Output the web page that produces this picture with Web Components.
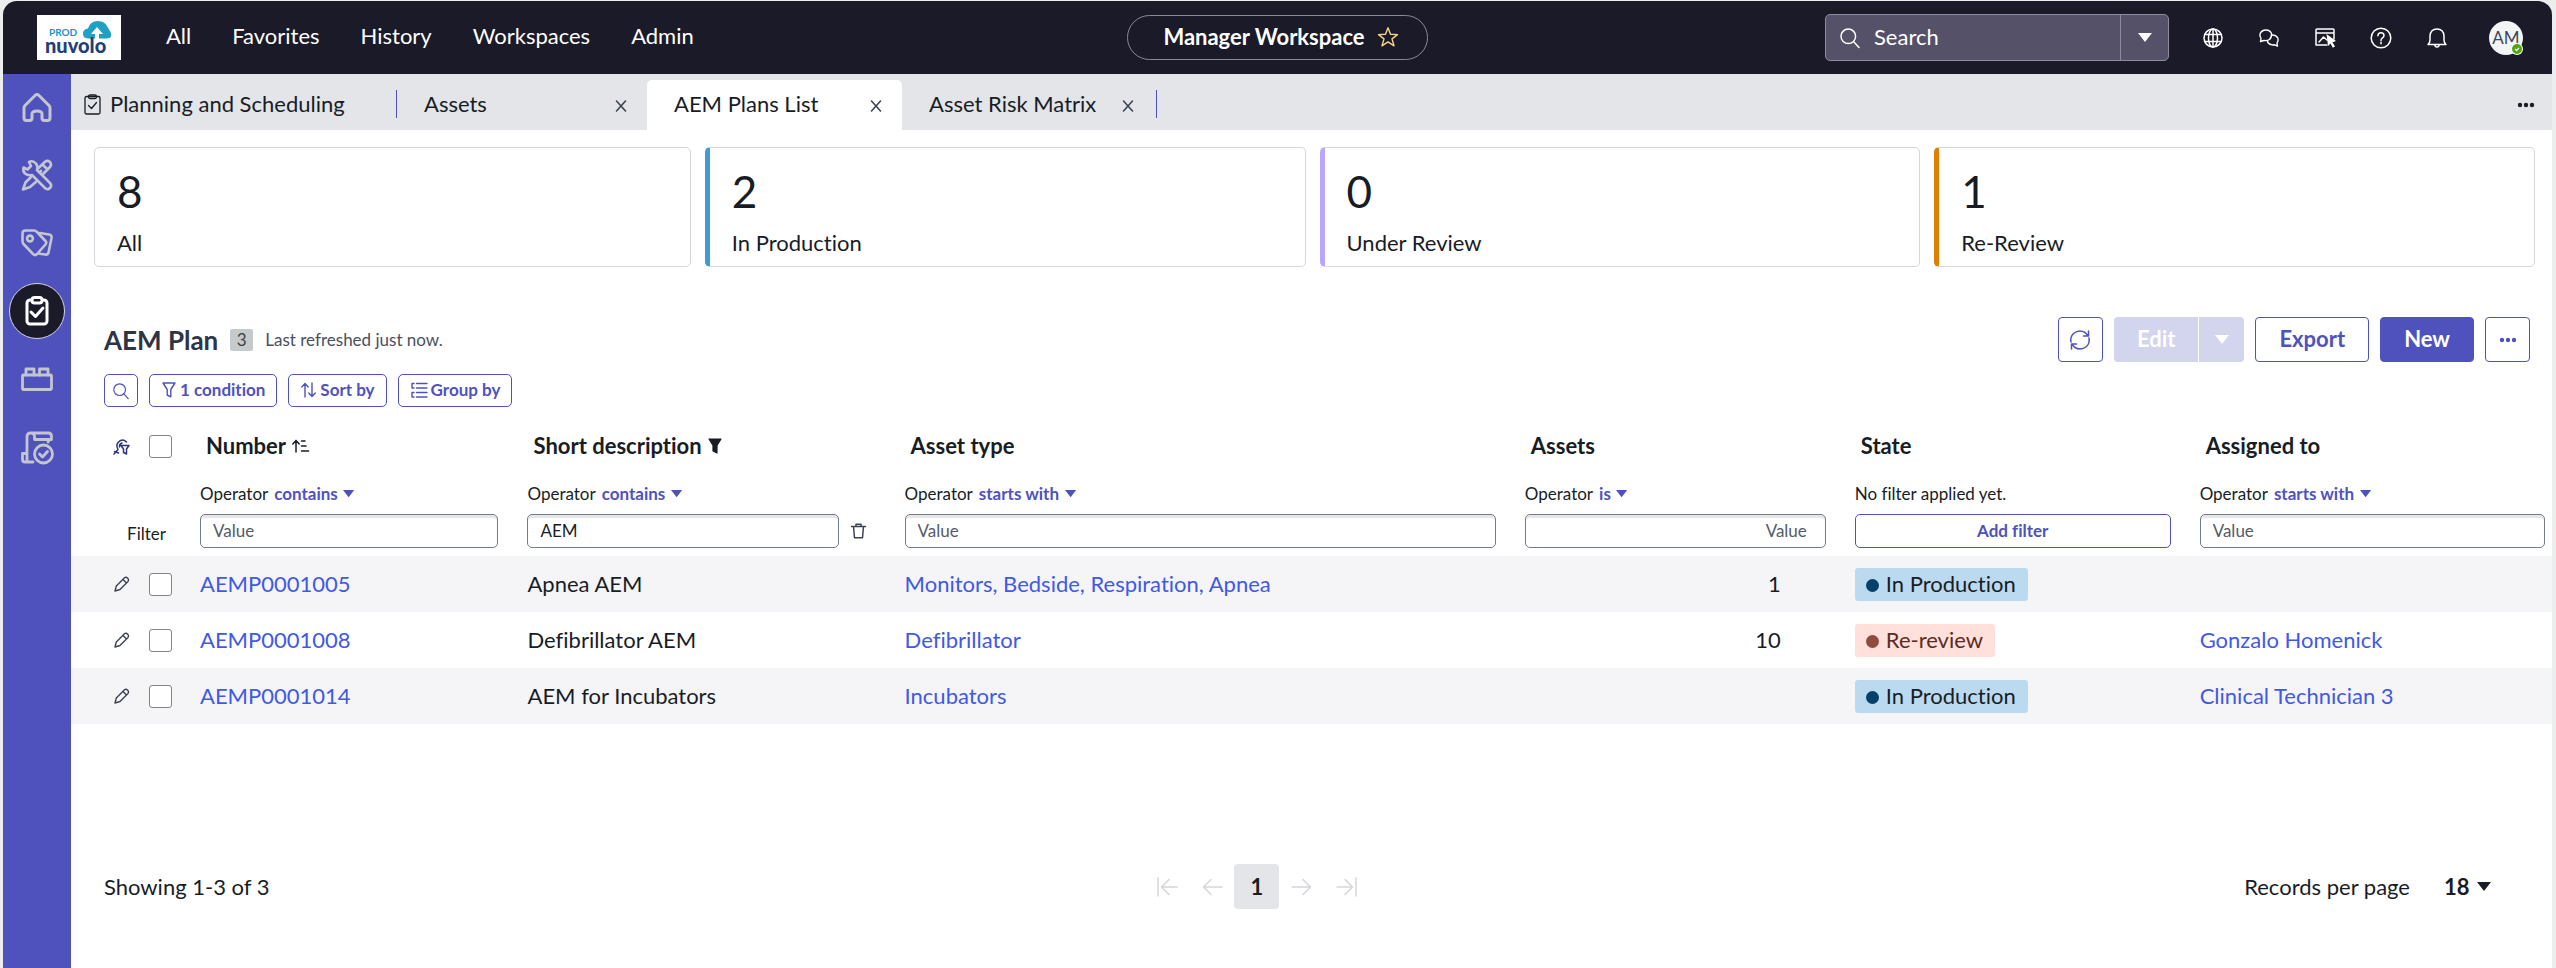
<!DOCTYPE html>
<html lang="en">
<head>
<meta charset="utf-8">
<title>AEM Plans List | Manager Workspace</title>
<style>
    html, body{
        margin: 0;
        height: 100%;
    }
    body{
        box-sizing: border-box;
        min-height: 100vh;
        padding: 1px 4px 0 3px;
        background: #eceeee;
        color: #181d25;
        font-family: Lato, "Open Sans", sans-serif;
        font-size: 22px;
        font-variant-ligatures: none;
        line-height: 28px;
    }
</style>
</head>
<body>
<app-shell>
    <app-header slot="header"></app-header>
    <app-sidebar slot="sidebar"></app-sidebar>
    <tab-bar slot="tabs">
        <tab-item icon="clipboard" divider style="width: 326px">Planning and Scheduling</tab-item>
        <tab-item closable style="width: 250px">Assets</tab-item>
        <tab-item closable active style="width: 255px">AEM Plans List</tab-item>
        <tab-item closable divider style="width: 255px">Asset Risk Matrix</tab-item>
    </tab-bar>
    <score-cards slot="cards">
        <score-card value="8">All</score-card>
        <score-card value="2" style="--accent: #449bd3" accent>In Production</score-card>
        <score-card value="0" style="--accent: #baa6ff" accent>Under Review</score-card>
        <score-card value="1" style="--accent: #df7e00" accent>Re-Review</score-card>
    </score-cards>
    <plan-list slot="list"></plan-list>
    <list-pager slot="pager"></list-pager>
</app-shell>

<script>
const ICONS = {
    home: ['0 0 30 30', 3, '<path d="M3 13.500L13 3.500Q15 1.500 17 3.500L27 13.500Q28 14.500 28 16V26Q28 28.500 25.500 28.500H22.500Q20 28.500 20 26V22Q20 19 15 19Q10 19 10 22V26Q10 28.500 7.500 28.500H4.500Q2 28.500 2 26V16Q2 14.500 3 13.500Z"/>'],
    tools: ['0 0 32 32', 2.6, '<path d="M2.500 8.500L6.500 10.500L10 7L8 3Q12 1 15 4.500Q17 7 16 11L29.500 24.500Q31 27 29 29Q27 31 24.500 29.500L11 16Q7 17 4 14.500Q1.500 12 2.500 8.500Z"/><path d="M17.500 9L24 2.800Q26.500 1 29 3Q31 5.500 29 8L22.500 14.500M22 6L26.500 10.500M10 18L4.500 23.500L2 30.500L9 28L16 22M20 12L18.500 13.500"/>'],
    tags: ['0 0 32 28', 2.6, '<path d="M1.500 4.500Q1.500 1.500 4.500 1.500H13Q14.500 1.500 16 3L24.500 12Q26 13.500 24.500 15.500L16 25Q14 27 12 25L2.500 15Q1.500 14 1.500 12Z"/><circle cx="9" cy="9.500" r="2.900"/><path d="M19 4L28 5.500Q31 6 30.500 9L27.500 23.500Q27 26 24 25.500L17 24.500"/>'],
    board: ['0 0 24 30', 3, '<rect x="2" y="4" width="20" height="24" rx="3"/><rect x="7" y="1.500" width="10" height="5.500" rx="2.500" fill="#1b1a28"/><path d="M6 16L10.500 20.500L18 12"/>'],
    clipboard: ['0 0 17 21', 1.3, '<rect x="1" y="2.500" width="15" height="17.500" rx="1.500"/><rect x="4.500" y="1" width="8" height="3.500" rx="1.500"/><path d="M4.500 11.500L7.500 14.500L12.500 8.500"/>'],
    brick: ['0 0 32 24', 2.8, '<rect x="1.500" y="8" width="29" height="14.500" rx="1"/><path d="M5 8V2H13V8M18.500 8V2H27V8"/>'],
    report: ['0 0 34 33', 2.8, '<path d="M7 22.500V5.500Q7 2 10.500 2H28.500Q31 2 31.500 5V8.500H14.500V5.500Q14.500 2 11 2M31.500 8.500Q29 8 28 11M7 22.500H2.500V28.500Q2.500 31 5 31H13M7 22.500V31"/><circle cx="23.500" cy="23" r="9"/><path d="M19.500 23L22.500 26L27.500 20.500"/>'],
    search: ['0 0 20 20', 1.5, '<circle cx="8.300" cy="8.300" r="7.300"/><path d="M13.700 13.700L19 19.500"/>'],
    star: ['0 0 22 22', 1.4, '<path d="M11 1.800L13.500 8.300L20.500 8.600L15 12.900L17 19.800L11 15.900L5 19.800L7 12.900L1.500 8.600L8.500 8.300Z"/>'],
    globe: ['0 0 20 20', 1.5, '<circle cx="10" cy="10" r="9"/><ellipse cx="10" cy="10" rx="4.500" ry="9"/><path d="M10 1V19M1.800 6.500H18.200M1.800 13.500H18.200"/>'],
    chat: ['0 0 20 18', 1.4, '<path d="M1.500 12.500L2 9.500Q.5 7 1 5Q2.500 1 7 1Q11 1 12.500 4.500Q13 8 10.500 10.500Q8 12 5 11.500Z"/><path d="M13 6Q17.500 6 19 9.500Q19.500 12 18 14L18.500 17L15.500 15.800Q11 16.500 8.800 13.500L8.500 12"/>'],
    pointer: ['0 0 21 20', 1.5, '<path d="M19 11V2Q19 1 18 1H2Q1 1 1 2V17H12M1 5H19M4 14L8.500 9L12 12"/><path fill="currentColor" stroke="none" d="M11.500 6L21 13L17.500 14.200L20 18.500L17.800 19.800L15.500 15.500L13 18Z"/>'],
    help: ['0 0 22 22', 1.5, '<circle cx="11" cy="11" r="9.800"/><path d="M7.900 8.800Q8 5.700 11 5.700Q14 5.700 14 8.500Q14 10 12.300 11Q11 11.900 11 13.500M11 15.200V16.700"/>'],
    bell: ['0 0 20 20', 1.5, '<path d="M1 16.500Q3 15 3 12V8Q3.500 1 10 1Q16.500 1 17 8V12Q17 15 19 16.500ZM7.800 16.800Q8 19 10 19Q12 19 12.200 16.800"/>'],
    close: ['0 0 12 12', 1.6, '<path d="M1.500 1L10.500 11M10.500 1L1.500 11"/>'],
    dots: ['0 0 18 6', 0, '<g fill="currentColor"><circle cx="3" cy="3" r="2.200"/><circle cx="9" cy="3" r="2.200"/><circle cx="15" cy="3" r="2.200"/></g>'],
    caret: ['0 0 14 9', 0, '<path fill="currentColor" d="M0 0H14L7 9Z"/>'],
    refresh: ['0 0 22 22', 1.5, '<path d="M2 13Q1 8 4.500 4.500Q10 0 16 3.500L19 6.500M19.500 2V7H14.500M20 9Q21 14 17.500 17.500Q12 22 6 18.500L3 15.500M2.500 20V15H7.500"/>'],
    filter: ['0 0 14 16', 1.4, '<path d="M1 1H13L8.800 7.500V14.800L5.200 13V7.500Z"/>'],
    funnel: ['0 0 14 16', 1.2, '<path fill="currentColor" d="M1 1H13L9 7.500V15L5 13V7.500Z"/>'],
    sort: ['0 0 15 16', 1.4, '<path d="M4 15V1.500M.8 5L4 1.500L7.200 5M11 1V14.500M7.800 11L11 14.500L14.200 11"/>'],
    group: ['0 0 16 16', 1.4, '<path d="M5.500 1.500H16M5.500 6H16M5.500 10.500H16M5.500 15H16M3 1.500H1V6H3M3 10.500H1V15H3"/>'],
    asc: ['0 0 17 14', 1.5, '<path d="M4 13V1.500M.8 5L4 1.500L7.200 5M9.500 2H13M9.500 7H14M9.500 12H16.500"/>'],
    personalize: ['0 0 17 17', 1.5, '<path d="M1 16L5 11.500Q2.500 7 5.500 4Q9.500 0 13.500 4M1.500 13.500L5.500 15M8 7.500H16L13.500 11V16L10.500 14.500V11ZM6.500 9Q6 6 9 5"/>'],
    trash: ['0 0 15 16', 1.5, '<path d="M.5 3.500H14.500M5 3.500V1.200H10V3.500M2.500 3.500L3.500 14.800H11.500L12.500 3.500"/>'],
    pencil: ['0 0 16 16', 1.4, '<path d="M1 15L2.300 10L10.500 1.800Q12 .6 13.800 2.200Q15.300 4 14 5.500L6 13.500L1 15M9 3.500L12.300 6.800"/>'],
    first: ['0 0 20 18', 1.5, '<path d="M1 0V18M20 9H5M12 1.500L4.500 9L12 16.500"/>'],
    prev: ['0 0 20 18', 1.5, '<path d="M20 9H2M9 1.500L1.500 9L9 16.500"/>'],
    next: ['0 0 20 18', 1.5, '<path d="M0 9H18M11 1.500L18.500 9L11 16.500"/>'],
    last: ['0 0 20 18', 1.5, '<path d="M19 0V18M0 9H15M8 1.500L15.500 9L8 16.500"/>']
};

// Common reset for the controls used inside every shadow root
const BASE = `
    *, :host{ box-sizing: border-box; }
    button, input, select{
        font: inherit;
        font-variant-ligatures: none;
        color: inherit;
        background: none;
        border: 0;
        padding: 0;
        margin: 0;
    }
    button{
        display: inline-flex;
        align-items: center;
        justify-content: center;
    }
    a{
        color: inherit;
        text-decoration: none;
    }
`;

class BaseElement extends HTMLElement {
    constructor() {
        super();
        this.attachShadow({mode: "open"});
    }
    connectedCallback() {
        this.render();
    }
    getStyles(){
        return '';
    }
    render(){
        const template = document.createElement("template");
        template.innerHTML = `<style>${BASE}${this.getStyles()}</style>${this.getTemplate()}`;
        this.shadowRoot.replaceChildren(template.content.cloneNode(true));
    }
}

class UiIcon extends BaseElement {
    getTemplate(){
        const [box, stroke, shapes] = ICONS[this.getAttribute('name')];
        const [, , w, h] = box.split(' ');
        return `<svg viewBox="${box}" width="${w}" height="${h}" fill="none" stroke="currentColor" stroke-width="${stroke}" stroke-linejoin="round" stroke-linecap="round" aria-hidden="true">${shapes}</svg>`;
    }
    getStyles(){
        return `
            :host{ display: inline-flex; flex: none; }
            svg{ display: block; overflow: visible; }
        `;
    }
}

class AppShell extends BaseElement {
    getTemplate(){
        return `
            <slot name="header"></slot>
            <div class="body">
                <slot name="sidebar"></slot>
                <main>
                    <slot name="tabs"></slot>
                    <slot name="cards"></slot>
                    <slot name="list"></slot>
                    <slot name="pager"></slot>
                </main>
            </div>
        `;
    }
    getStyles(){
        return `
            :host{
                display: flex;
                flex-direction: column;
                min-height: calc(100vh - 1px);
            }
            .body{
                display: flex;
                flex: 1;
            }
            main{
                display: flex;
                flex-direction: column;
                flex: 1;
                min-width: 0;
                background: #fff;
            }
        `;
    }
}

class AppHeader extends BaseElement {
    getTemplate(){
        return `
            <div class="left">
                <brand-logo></brand-logo>
                <nav>
                    <a href="#all">All</a>
                    <a href="#favorites">Favorites</a>
                    <a href="#history">History</a>
                    <a href="#workspaces">Workspaces</a>
                    <a href="#admin">Admin</a>
                </nav>
            </div>
            <button class="workspace">Manager Workspace <ui-icon name="star"></ui-icon></button>
            <div class="right">
                <div class="search">
                    <ui-icon name="search"></ui-icon>
                    <input type="search" placeholder="Search" aria-label="Search">
                    <button aria-label="Search scope"><ui-icon name="caret"></ui-icon></button>
                </div>
                <button class="tool" aria-label="Language"><ui-icon name="globe"></ui-icon></button>
                <button class="tool" aria-label="Chat"><ui-icon name="chat"></ui-icon></button>
                <button class="tool" aria-label="Guided tour"><ui-icon name="pointer"></ui-icon></button>
                <button class="tool" aria-label="Help"><ui-icon name="help"></ui-icon></button>
                <button class="tool" aria-label="Notifications"><ui-icon name="bell"></ui-icon></button>
                <button class="avatar">AM
                    <svg viewBox="0 0 12 12" width="12" height="12"><circle cx="6" cy="6" r="6" fill="#fff"/><circle cx="6" cy="6" r="5" fill="#4ea70c"/><path d="M4 6L5.500 7.500L8 5" fill="none" stroke="#fff" stroke-width="1.300"/></svg>
                </button>
            </div>
        `;
    }
    getStyles(){
        return `
            :host{
                display: grid;
                grid-template-columns: 1fr auto 1fr;
                align-items: center;
                height: 73px;
                background: #1b1a28;
                border-radius: 14px 14px 0 0;
                color: #fff;
            }
            .left, .right, nav{
                display: flex;
                align-items: center;
            }
            .left{ padding-left: 34px; gap: 45px; }
            nav{ gap: 41px; padding-bottom: 3px; }
            .right{ justify-content: flex-end; padding-right: 29px; }
            .workspace{
                height: 45px;
                padding: 0 28px 2px 35px;
                gap: 12px;
                border: 1px solid #8a8996;
                border-radius: 23px;
                font-weight: 700;
            }
            .workspace ui-icon{ color: #f5d48a; }
            .search{
                display: flex;
                align-items: center;
                width: 344px;
                height: 47px;
                margin-right: 16px;
                padding-left: 14px;
                gap: 14px;
                background: #545168;
                border: 1px solid #8d8b9c;
                border-radius: 5px;
            }
            .search input{
                flex: 1;
                min-width: 0;
                padding-bottom: 2px;
                outline: 0;
            }
            .search input::placeholder{ color: #fff; opacity: 1; }
            .search button{
                width: 48px;
                height: 45px;
                border-left: 1px solid #8d8b9c;
            }
            .tool{ width: 56px; height: 45px; }
            .avatar{
                position: relative;
                width: 34px;
                height: 34px;
                margin-left: 24px;
                border-radius: 50%;
                background: #f3f4f6;
                color: #3f4656;
                font-size: 17px;
            }
            .avatar svg{
                position: absolute;
                right: 0;
                bottom: 0;
            }
        `;
    }
}

class BrandLogo extends BaseElement {
    getTemplate(){
        return `
            <svg viewBox="0 0 84 45" width="84" height="45" role="img" aria-label="Nuvolo">
                <rect width="84" height="45" fill="#fff"/>
                <path fill="#20a0c4" d="M51 23.500Q45.500 23 46 18Q46.500 14 51 13.500Q53 6 61 6Q68 6 70.500 12Q73 16 73.500 17Q76 23 70 23.500Z"/>
                <path fill="#fff" d="M60 12L66 19H62V24H58V19H54Z"/>
                <text x="12" y="21" font-size="10" font-weight="700" fill="#1496c4">PROD</text>
                <text x="8" y="38" font-size="20" font-weight="900" fill="#1f4076">nuvolo</text>
            </svg>
        `;
    }
    getStyles(){
        return `
            :host{ display: block; flex: none; }
            svg{ display: block; }
        `;
    }
}

class AppSidebar extends BaseElement {
    getTemplate(){
        const items = ['home', 'tools', 'tags', 'board', 'brick', 'report'];
        return `<nav>${items.map(name => `
            <a href="#${name}" class="${name === 'board' ? 'current' : ''}" aria-label="${name}"><ui-icon name="${name}"></ui-icon></a>
        `).join('')}</nav>`;
    }
    getStyles(){
        return `
            :host{
                display: block;
                flex: none;
                width: 68px;
                background: #4f52bd;
            }
            nav{
                display: flex;
                flex-direction: column;
                align-items: center;
                gap: 12px;
                padding-top: 5px;
            }
            a{
                display: flex;
                align-items: center;
                justify-content: center;
                width: 56px;
                height: 56px;
                border-radius: 50%;
                color: #c3c5d0;
            }
            .current{
                background: #1b1a28;
                border: 1px solid #d5d5e8;
                color: #fff;
            }
        `;
    }
}

class TabBar extends BaseElement {
    getTemplate(){
        return `
            <slot></slot>
            <button aria-label="More tabs"><ui-icon name="dots"></ui-icon></button>
        `;
    }
    getStyles(){
        return `
            :host{
                display: flex;
                height: 56px;
                padding-top: 6px;
                background: #e3e5e9;
            }
            button{
                width: 42px;
                margin: 0 5px 0 auto;
            }
        `;
    }
}

class TabItem extends BaseElement {
    getTemplate(){
        const icon = this.getAttribute('icon');
        return `
            ${icon ? `<ui-icon name="${icon}"></ui-icon>` : ''}
            <a href="#tab"><slot></slot></a>
            ${this.hasAttribute('closable') ? '<button aria-label="Close tab"><ui-icon name="close"></ui-icon></button>' : ''}
            ${this.hasAttribute('divider') ? '<i></i>' : ''}
        `;
    }
    getStyles(){
        return `
            :host{
                display: flex;
                align-items: center;
                padding: 0 19px 2px 27px;
                white-space: nowrap;
            }
            :host([icon]){
                padding-left: 13px;
                gap: 9px;
            }
            :host([active]){
                background: #fff;
                border-radius: 5px 5px 0 0;
            }
            :host([divider]){ padding-right: 0; }
            button{
                width: 14px;
                height: 24px;
                margin-left: auto;
                padding-top: 3px;
                color: #3c4353;
            }
            i{
                width: 1px;
                height: 28px;
                margin-left: auto;
                background: #4f52bd;
            }
            button + i{ margin-left: 21px; }
        `;
    }
}

class ScoreCards extends BaseElement {
    getTemplate(){
        return `<slot></slot>`;
    }
    getStyles(){
        return `
            :host{
                display: flex;
                gap: 14px;
                padding: 17px 17px 0 23px;
            }
        `;
    }
}

class ScoreCard extends BaseElement {
    getTemplate(){
        return `
            <strong>${this.getAttribute('value')}</strong>
            <span><slot></slot></span>
        `;
    }
    getStyles(){
        return `
            :host{
                display: flex;
                flex-direction: column;
                flex: 1 1 0;
                padding: 17px 22px 9px;
                border: 1px solid #d5d7dd;
                border-radius: 5px;
            }
            :host([accent]){ border-left: 5px solid var(--accent); }
            strong{
                font-size: 44px;
                font-weight: 400;
                line-height: 52px;
                margin-bottom: 12px;
            }
        `;
    }
}

class StateTag extends BaseElement {
    getTemplate(){
        return `<i></i><slot></slot>`;
    }
    getStyles(){
        return `
            :host{
                display: inline-flex;
                align-items: center;
                gap: 7px;
                height: 33px;
                padding: 0 12px 0 11px;
                border-radius: 3px;
                background: #bbdaf0;
            }
            :host([kind="warn"]){
                background: #ffe0db;
                color: #5c2c23;
            }
            i{
                width: 13px;
                height: 13px;
                margin-top: 2px;
                border-radius: 50%;
                background: #03406a;
            }
            :host([kind="warn"]) i{ background: #8f4b3e; }
        `;
    }
}

const COLUMNS = [
    {id: 'number', title: 'Number', icon: 'asc', operator: 'contains', value: ''},
    {id: 'description', title: 'Short description', icon: 'funnel', operator: 'contains', value: 'AEM'},
    {id: 'type', title: 'Asset type', operator: 'starts with', value: ''},
    {id: 'assets', title: 'Assets', operator: 'is', value: ''},
    {id: 'state', title: 'State'},
    {id: 'assigned', title: 'Assigned to', operator: 'starts with', value: ''}
];

const ROWS = [
    {number: 'AEMP0001005', description: 'Apnea AEM', type: 'Monitors, Bedside, Respiration, Apnea', assets: '1', state: 'In Production', assigned: ''},
    {number: 'AEMP0001008', description: 'Defibrillator AEM', type: 'Defibrillator', assets: '10', state: 'Re-review', assigned: 'Gonzalo Homenick'},
    {number: 'AEMP0001014', description: 'AEM for Incubators', type: 'Incubators', assets: '', state: 'In Production', assigned: 'Clinical Technician 3'}
];

class PlanList extends BaseElement {
    getHeading({title, icon}){
        return `<th scope="col"><span>${title}${icon ? ` <ui-icon name="${icon}"></ui-icon>` : ''}</span></th>`;
    }
    getFilter({id, operator, value}){
        if (!operator) {
            return `<td><div class="operator">No filter applied yet.</div><button class="add">Add filter</button></td>`;
        }
        return `
            <td class="${id}">
                <div class="operator">
                    <label for="op-${id}">Operator</label>
                    <select id="op-${id}"><option>${operator}</option></select>
                    <ui-icon name="caret"></ui-icon>
                </div>
                <div class="field">
                    <input type="text" placeholder="Value" value="${value}" aria-label="${id} value">
                    ${value ? '<button aria-label="Clear filter"><ui-icon name="trash"></ui-icon></button>' : ''}
                </div>
            </td>
        `;
    }
    getRow(row){
        const link = text => text ? `<a href="#record">${text}</a>` : '';
        return `
            <tr>
                <td>
                    <div class="pick">
                        <button aria-label="Edit ${row.number}"><ui-icon name="pencil"></ui-icon></button>
                        <input type="checkbox" aria-label="Select ${row.number}">
                    </div>
                </td>
                <td>${link(row.number)}</td>
                <td>${row.description}</td>
                <td>${link(row.type)}</td>
                <td class="assets">${row.assets}</td>
                <td class="state"><state-tag ${row.state === 'Re-review' ? 'kind="warn"' : ''}>${row.state}</state-tag></td>
                <td>${link(row.assigned)}</td>
            </tr>
        `;
    }
    getTemplate(){
        return `
            <header>
                <h1>AEM Plan</h1>
                <span class="count">3</span>
                <span class="refreshed">Last refreshed just now.</span>
                <div class="actions">
                    <button class="square" aria-label="Refresh"><ui-icon name="refresh"></ui-icon></button>
                    <div class="split">
                        <button disabled>Edit</button>
                        <button disabled aria-label="Edit options"><ui-icon name="caret"></ui-icon></button>
                    </div>
                    <button class="export">Export</button>
                    <button class="new">New</button>
                    <button class="square" aria-label="More actions"><ui-icon name="dots"></ui-icon></button>
                </div>
            </header>
            <div class="tools">
                <button class="find" aria-label="Search list"><ui-icon name="search"></ui-icon></button>
                <button><ui-icon name="filter"></ui-icon>1 condition</button>
                <button><ui-icon name="sort"></ui-icon>Sort by</button>
                <button><ui-icon name="group"></ui-icon>Group by</button>
            </div>
            <table>
                <colgroup>
                    <col class="c-pick"><col class="c-number"><col class="c-description"><col class="c-type">
                    <col class="c-assets"><col class="c-state"><col>
                </colgroup>
                <thead>
                    <tr class="titles">
                        <th>
                            <div class="pick">
                                <button class="personalize" aria-label="Personalize"><ui-icon name="personalize"></ui-icon></button>
                                <input type="checkbox" aria-label="Select all">
                            </div>
                        </th>
                        ${COLUMNS.map(this.getHeading).join('')}
                    </tr>
                    <tr class="filters">
                        <td class="caption">Filter</td>
                        ${COLUMNS.map(this.getFilter).join('')}
                    </tr>
                </thead>
                <tbody>${ROWS.map(this.getRow).join('')}</tbody>
            </table>
        `;
    }
    getStyles(){
        return `
            :host{
                --primary: #4f52bd;
                display: block;
                flex: 1;
                padding-top: 50px;
            }
            header{
                display: flex;
                align-items: center;
                padding: 0 22px 0 33px;
            }
            h1{
                margin: 0 12px 0 0;
                color: #2e3445;
                font-size: 26px;
                font-weight: 700;
            }
            .count{
                width: 23px;
                height: 22px;
                margin-right: 12px;
                border-radius: 2px;
                background: #c5caca;
                color: #3d4347;
                font-size: 17px;
                line-height: 21px;
                text-align: center;
            }
            .refreshed{
                color: #4a505c;
                font-size: 17px;
            }
            .actions{
                display: flex;
                gap: 11px;
                margin-left: auto;
            }
            .actions button{
                height: 45px;
                padding: 0 23px 2px;
                border: 1px solid var(--primary);
                border-radius: 4px;
                color: var(--primary);
                font-weight: 700;
            }
            .actions .square{
                width: 45px;
                padding: 0;
            }
            .actions .new{
                background: var(--primary);
                color: #fff;
            }
            .split{
                display: flex;
                gap: 1px;
            }
            .actions .split button{
                border: 0;
                background: #d3d4ee;
                color: #fff;
            }
            .actions .split button:first-child{ border-radius: 4px 0 0 4px; }
            .actions .split button:last-child{
                width: 45px;
                padding: 0;
                border-radius: 0 4px 4px 0;
            }
            .tools{
                display: flex;
                gap: 11px;
                padding: 12px 33px 0;
            }
            .tools button{
                height: 33px;
                gap: 4px;
                padding: 0 11px 2px 12px;
                border: 1px solid var(--primary);
                border-radius: 5px;
                color: var(--primary);
                font-size: 17px;
                font-weight: 700;
            }
            .tools .find{
                width: 34px;
                padding: 0;
            }
            .find ui-icon{ zoom: .8; }
            table{
                width: 100%;
                margin-top: 11px;
                border-spacing: 0;
                table-layout: fixed;
            }
            .c-pick{ width: 114px; }
            .c-number{ width: 13.2%; }
            .c-description{ width: 15.2%; }
            .c-type{ width: 25%; }
            .c-assets{ width: 13.3%; }
            .c-state{ width: 13.9%; }
            th, td{
                padding: 0 14px 0 15px;
                text-align: left;
                white-space: nowrap;
            }
            th:last-child, td:last-child{ padding-right: 7px; }
            th:first-child, td:first-child{ padding-right: 13px; }
            .titles th{
                height: 56px;
                font-weight: 700;
            }
            .titles span{
                display: flex;
                align-items: center;
                gap: 6px;
                padding-left: 6px;
            }
            .pick{
                display: flex;
                align-items: center;
                justify-content: flex-end;
                gap: 19px;
                color: #3c4353;
            }
            .personalize{ color: #30347f; }
            input[type=checkbox]{
                appearance: none;
                width: 23px;
                height: 23px;
                border: 1px solid #7e8494;
                border-radius: 3px;
                background: #fff;
            }
            .filters td{
                height: 82px;
                padding-bottom: 8px;
                vertical-align: bottom;
                font-size: 17px;
            }
            .filters td.caption{
                padding: 0 19px 8px 0;
                text-align: right;
            }
            .operator{
                display: flex;
                align-items: center;
                height: 28px;
                margin-bottom: 6px;
            }
            select{
                appearance: none;
                margin: 0 5px 0 6px;
                color: var(--primary);
                font-weight: 700;
            }
            .operator ui-icon{
                color: var(--primary);
                zoom: .8;
            }
            .field{
                display: flex;
                align-items: center;
            }
            .field input{
                flex: 1;
                min-width: 0;
                height: 34px;
                padding: 0 12px 2px;
                border: 1px solid #747b8b;
                border-radius: 5px;
                box-shadow: inset 0 3px 1px #e6e6e8;
            }
            .field input::placeholder{
                color: #555b67;
                opacity: 1;
            }
            .field button{
                width: 40px;
                margin-right: -3px;
                color: #3c4353;
            }
            td.assets .field input{
                padding-right: 18px;
                text-align: right;
            }
            .add{
                width: 100%;
                height: 34px;
                border: 1px solid var(--primary);
                border-radius: 5px;
                color: var(--primary);
                font-weight: 700;
            }
            tbody td{ height: 56px; }
            tbody td a{ color: #4059e6; }
            tbody td.assets{
                padding-right: 59px;
                text-align: right;
            }
            tbody state-tag{ vertical-align: middle; }
            tbody tr:nth-child(odd){ background: #f5f5f8; }
        `;
    }
}

class ListPager extends BaseElement {
    getTemplate(){
        return `
            <span>Showing 1-3 of 3</span>
            <nav>
                <button disabled aria-label="First page"><ui-icon name="first"></ui-icon></button>
                <button disabled aria-label="Previous page"><ui-icon name="prev"></ui-icon></button>
                <button class="current">1</button>
                <button disabled aria-label="Next page"><ui-icon name="next"></ui-icon></button>
                <button disabled aria-label="Last page"><ui-icon name="last"></ui-icon></button>
            </nav>
            <div class="size">
                <label for="size">Records per page</label>
                <select id="size"><option>18</option></select>
                <ui-icon name="caret"></ui-icon>
            </div>
        `;
    }
    getStyles(){
        return `
            :host{
                display: flex;
                align-items: center;
                justify-content: space-between;
                padding: 0 61px 59px 33px;
            }
            nav, .size{
                display: flex;
                align-items: center;
            }
            nav button{
                width: 45px;
                height: 45px;
                color: #d4d6da;
            }
            nav .current{
                border-radius: 4px;
                background: #e3e5e9;
                color: #181d25;
                font-weight: 700;
            }
            select{
                appearance: none;
                margin: 0 7px 0 34px;
                font-weight: 700;
            }
        `;
    }
}

customElements.define("ui-icon", UiIcon);
customElements.define("app-shell", AppShell);
customElements.define("brand-logo", BrandLogo);
customElements.define("app-header", AppHeader);
customElements.define("app-sidebar", AppSidebar);
customElements.define("tab-bar", TabBar);
customElements.define("tab-item", TabItem);
customElements.define("score-cards", ScoreCards);
customElements.define("score-card", ScoreCard);
customElements.define("state-tag", StateTag);
customElements.define("plan-list", PlanList);
customElements.define("list-pager", ListPager);
</script>
</body>
</html>
